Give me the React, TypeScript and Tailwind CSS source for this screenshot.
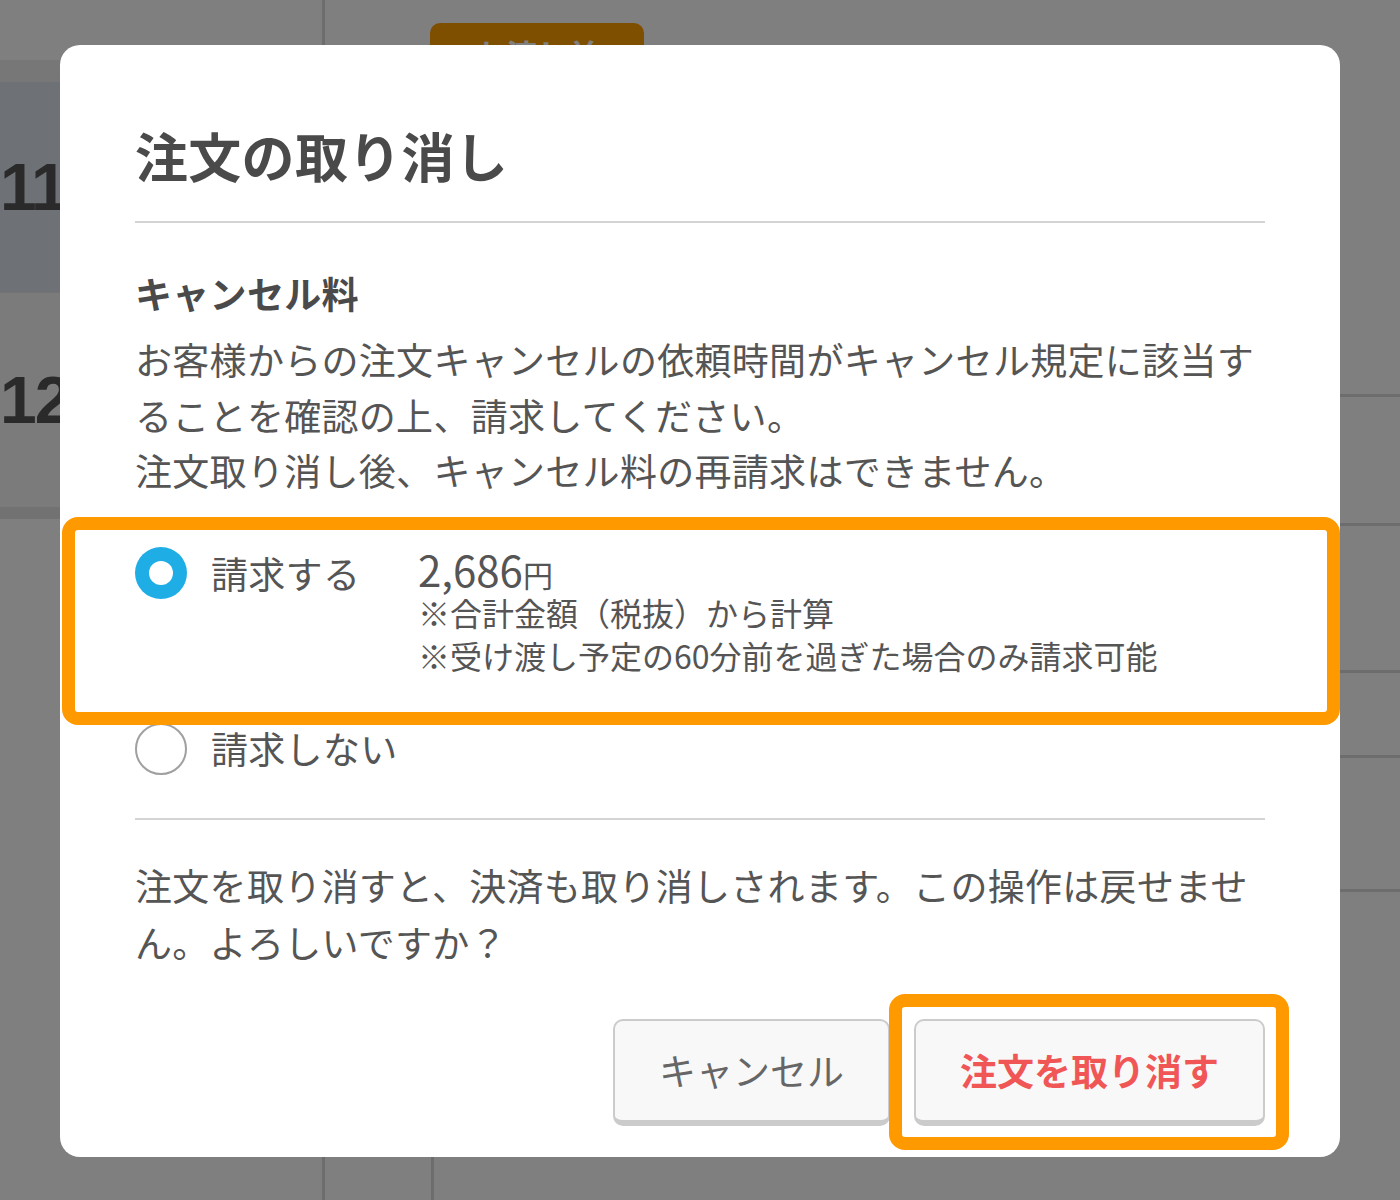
import React from 'react';

const jp = "font-['Noto_Sans_CJK_JP','Noto_Sans',sans-serif]";

const Radio: React.FC<{ checked?: boolean }> = ({ checked }) =>
  checked ? (
    <span className="flex h-[52px] w-[52px] shrink-0 items-center justify-center rounded-full bg-[#1fade6]">
      <span className="h-[24px] w-[24px] rounded-full bg-white" />
    </span>
  ) : (
    <span className="h-[52px] w-[52px] shrink-0 rounded-full border-2 border-[#a0a0a0] bg-white" />
  );

const Highlight: React.FC<{ className: string }> = ({ className }) => (
  <div className={`pointer-events-none absolute rounded-[16px] border-[13px] border-[#ff9900] ${className}`} />
);

const Background: React.FC = () => (
  <div className="flex h-[1200px] w-full bg-white">
    <div className="flex w-[325px] shrink-0 flex-col border-r-[3px] border-[#dadada]">
      <div className="h-[60px]" />
      <div className="h-[22px] bg-[#eeeeee]" />
      <div className="flex h-[211px] items-center border-b border-[#e6e6e6] bg-[#dce4ec] font-['Liberation_Sans',sans-serif] text-[66px] font-bold tracking-[-2px] text-[#555]">
        11
      </div>
      <div className="flex h-[214px] items-center bg-[#f7f7f7] font-['Liberation_Sans',sans-serif] text-[66px] font-bold tracking-[-2px] text-[#555]">
        12
      </div>
      <div className="h-[12px] bg-[#e4e4e4]" />
    </div>
    <div className="flex flex-1 flex-col">
      <div className="h-[397px] border-b-[3px] border-[#dadada] pl-[105px] pt-[23px]">
        <div className={`flex h-[80px] w-[214px] justify-center rounded-[10px] bg-[#ff9e00] pt-[8px] text-[31px] font-bold text-white ${jp}`}>
          お渡し前
        </div>
      </div>
      <div className="h-[129px] border-b-[3px] border-[#dadada]" />
      <div className="h-[147px] border-b-[3px] border-[#dadada]" />
      <div className="h-[85px] border-b-[3px] border-[#dadada]" />
      <div className="h-[134px] border-b-[3px] border-[#dadada]" />
      <div className="ml-[106px] flex-1 border-l-[3px] border-[#dadada]" />
    </div>
  </div>
);

export default function App() {
  return (
    <div className={`relative h-[1200px] w-[1400px] overflow-hidden ${jp}`}>
      <Background />
      <div className="absolute inset-0 bg-black/50" />

      <div className="absolute left-[60px] top-[45px] w-[1280px] rounded-[20px] bg-white px-[75px] pb-[31px] pt-[79px] tracking-[0.3px] text-[#555]">
        <h2 className="text-[53px] font-bold leading-[62px] text-[#4a4a4a]">注文の取り消し</h2>
        <div className="mt-[35px] h-[2px] bg-[#d4d4d4]" />

        <h3 className="mt-[42px] text-[37px] font-bold leading-[56px] text-[#4a4a4a]">キャンセル料</h3>
        <p className="mt-[11px] text-[37px] leading-[55.5px]">
          お客様からの注文キャンセルの依頼時間がキャンセル規定に該当することを確認の上、請求してください。
          <br />
          注文取り消し後、キャンセル料の再請求はできません。
        </p>

        <div className="relative mt-[48.5px] flex items-start">
          <Highlight className="-left-[73px] -right-[75px] -top-[30px] -bottom-[48px]" />
          <Radio checked />
          <span className="ml-[24px] w-[207px] text-[37px] leading-[52px]">請求する</span>
          <div className="flex flex-col tracking-normal">
            <div className="h-[44px] text-[42px] leading-[44px]">
              2,686<span className="text-[30px] leading-none">円</span>
            </div>
            <div className="text-[32px] leading-[43px]">※合計金額（税抜）から計算</div>
            <div className="text-[32px] leading-[43px]">※受け渡し予定の60分前を過ぎた場合のみ請求可能</div>
          </div>
        </div>

        <div className="mt-[46px] flex items-start">
          <Radio />
          <span className="ml-[24px] text-[37px] leading-[50px]">請求しない</span>
        </div>

        <div className="mt-[43px] h-[2px] bg-[#d4d4d4]" />

        <p className="mt-[36.5px] text-[37px] leading-[57px]">
          注文を取り消すと、決済も取り消しされます。この操作は戻せません。よろしいですか？
        </p>

        <div className="mt-[48.5px] flex justify-end gap-[24px] tracking-normal">
          <button className="h-[107px] rounded-[10px] border-2 border-b-[6px] border-[#cbcbcb] bg-[#f8f8f8] px-[44px] text-[37px] text-[#666]">
            キャンセル
          </button>
          <div className="relative">
            <Highlight className="-left-[25px] -right-[24px] -top-[25px] -bottom-[24px]" />
            <button className="h-[107px] rounded-[10px] border-2 border-b-[6px] border-[#cbcbcb] bg-[#f8f8f8] px-[44px] text-[37px] font-bold text-[#f15656]">
              注文を取り消す
            </button>
          </div>
        </div>
      </div>
    </div>
  );
}
